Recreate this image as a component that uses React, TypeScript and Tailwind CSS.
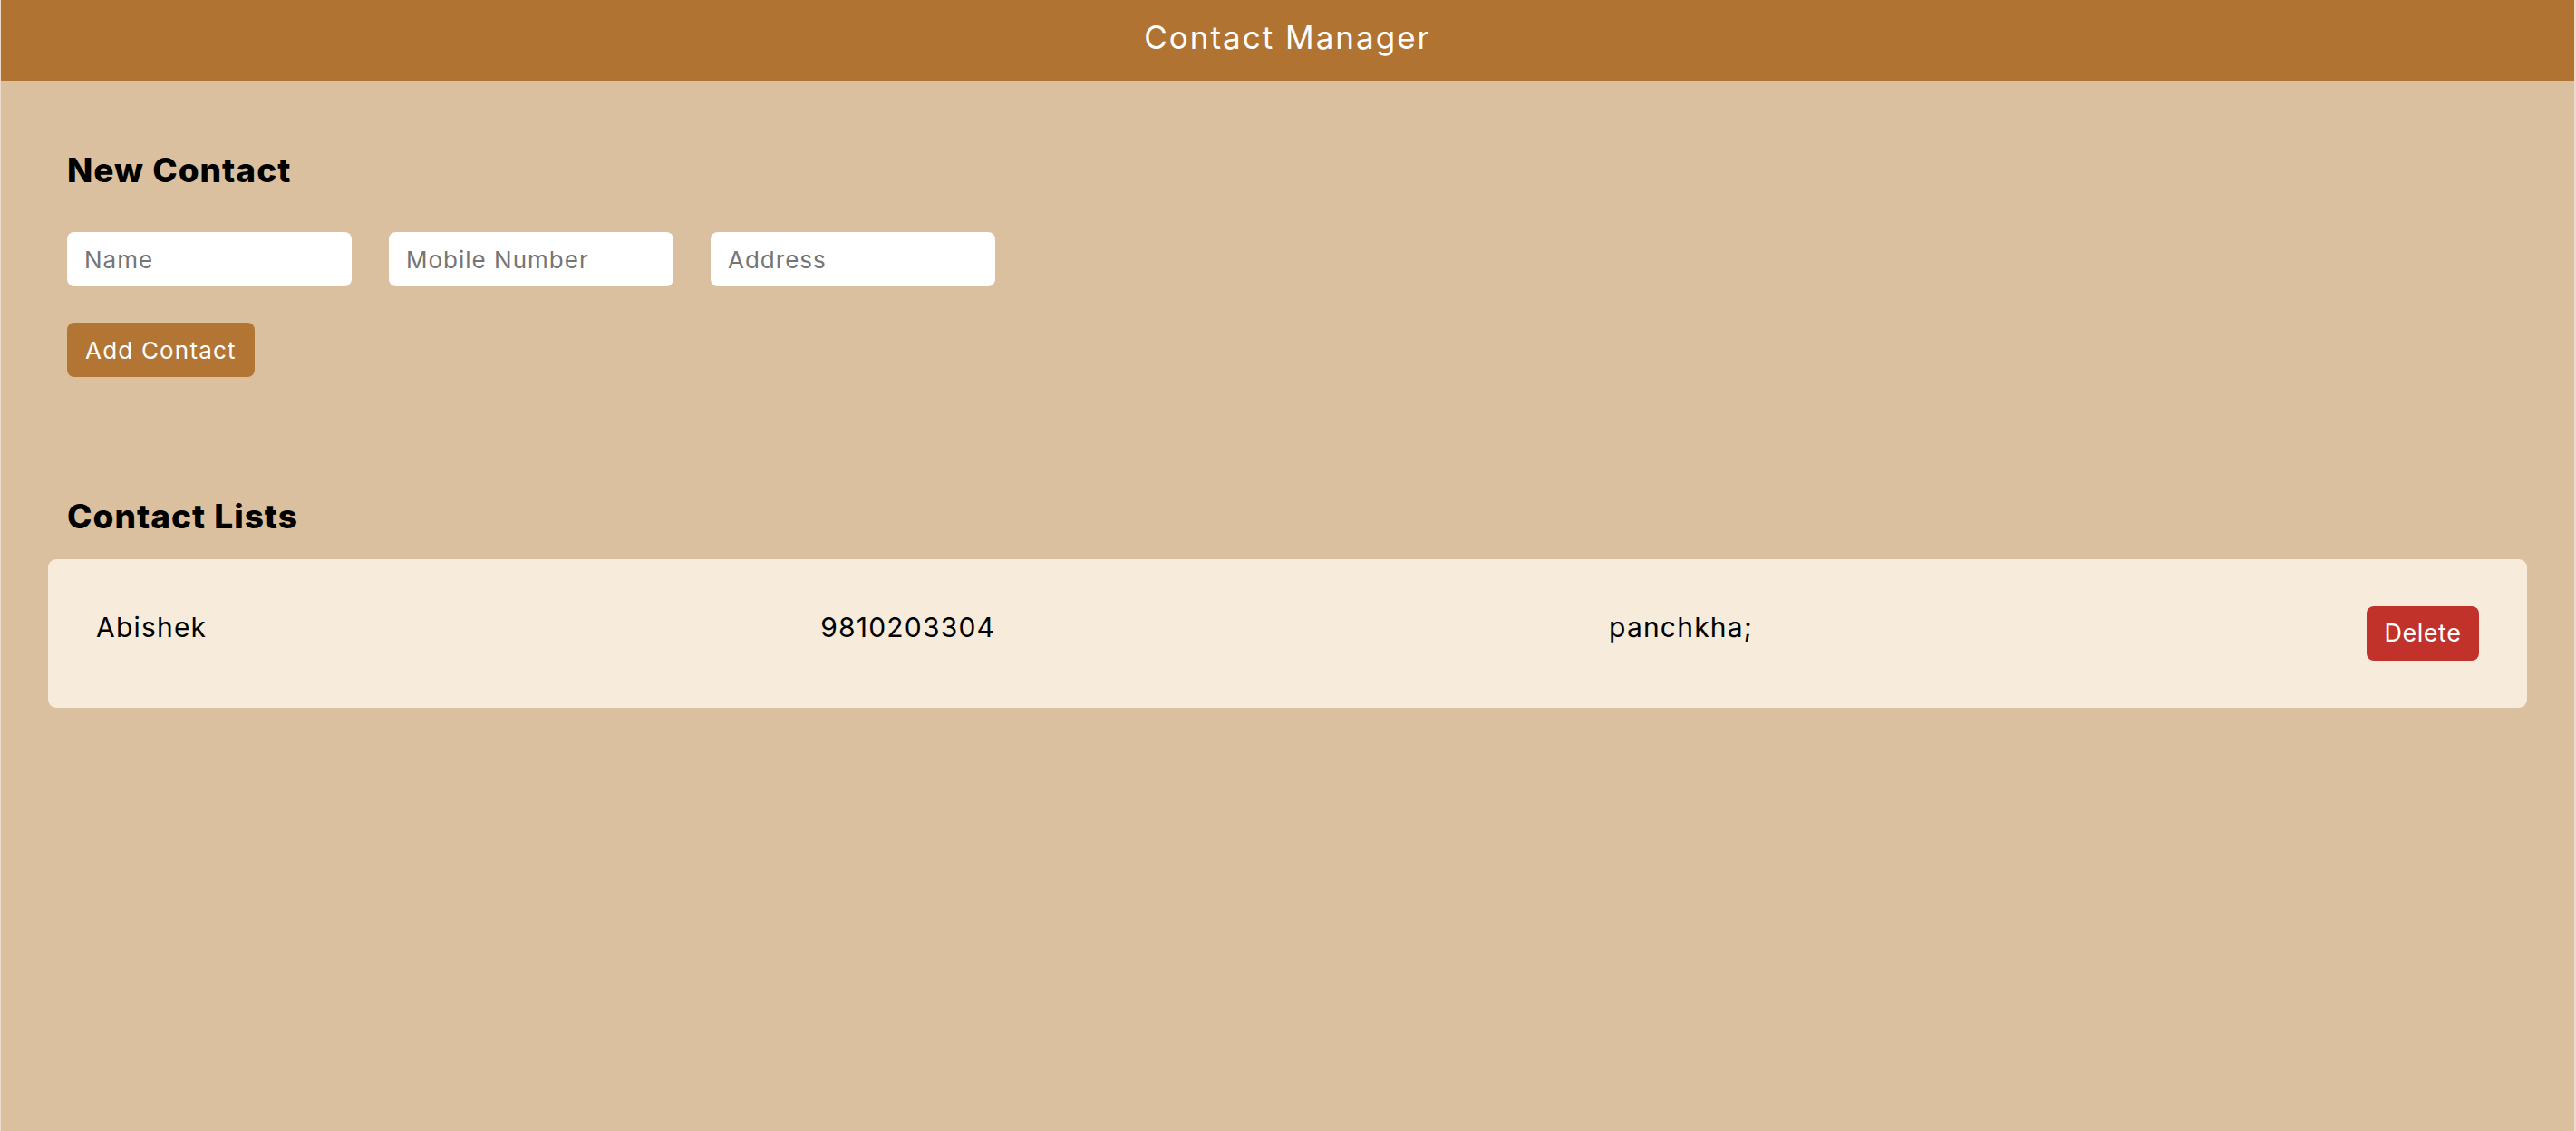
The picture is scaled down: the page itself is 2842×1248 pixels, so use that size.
import React, { useState } from "react";

type Contact = {
  id: number;
  name: string;
  mobile: string;
  address: string;
};

const font = { fontFamily: "Inter, 'Noto Sans', sans-serif" };

export default function App() {
  const [contacts, setContacts] = useState<Contact[]>([
    { id: 1, name: "Abishek", mobile: "9810203304", address: "panchkha;" },
  ]);
  const [name, setName] = useState("");
  const [mobile, setMobile] = useState("");
  const [address, setAddress] = useState("");

  const addContact = () => {
    if (!name.trim()) return;
    setContacts([...contacts, { id: Date.now(), name, mobile, address }]);
    setName("");
    setMobile("");
    setAddress("");
  };

  const deleteContact = (id: number) =>
    setContacts(contacts.filter(c => c.id !== id));

  return (
    <div
      className="min-h-screen bg-[#dbc0a0] border-l border-r-2 border-[#ebdccb]"
      style={font}
    >
      <header className="h-[89px] bg-[#b07332] flex items-center justify-center">
        <h1 className="text-white text-[35px] font-normal leading-none tracking-[2px] pb-[6px]">
          Contact Manager
        </h1>
      </header>

      <main className="pb-10">
        {/* New contact form */}
        <section className="px-[73px] pt-[80px]">
          <h2 className="text-[37px] font-extrabold leading-none text-black tracking-[1px]">
            New Contact
          </h2>
          <div className="flex gap-[41px] mt-[50px]">
            <input
              autoFocus
              value={name}
              onChange={e => setName(e.target.value)}
              placeholder="Name"
              className="w-[314px] h-[60px] rounded-[8px] bg-white px-[19px] text-[26px] tracking-[1px] text-black placeholder:text-[#757575] outline-none"
            />
            <input
              value={mobile}
              onChange={e => setMobile(e.target.value)}
              placeholder="Mobile Number"
              className="w-[314px] h-[60px] rounded-[8px] bg-white px-[19px] text-[26px] tracking-[1px] text-black placeholder:text-[#757575] outline-none"
            />
            <input
              value={address}
              onChange={e => setAddress(e.target.value)}
              placeholder="Address"
              className="w-[314px] h-[60px] rounded-[8px] bg-white px-[19px] text-[26px] tracking-[1px] text-black placeholder:text-[#757575] outline-none"
            />
          </div>
          <button
            onClick={addContact}
            className="mt-[40px] h-[60px] px-[20px] rounded-[8px] bg-[#b27534] text-white text-[26px] tracking-[1.2px]"
          >
            Add Contact
          </button>
        </section>

        {/* Contact list */}
        <section className="pt-[135px]">
          <h2 className="px-[73px] text-[37px] font-extrabold leading-none text-black tracking-[1px]">
            Contact Lists
          </h2>
          <div className="mx-[52px] mt-[29px] flex flex-col gap-4">
            {contacts.map(c => (
              <div
                key={c.id}
                className="h-[164px] rounded-[9px] bg-[#f7ecdb] px-[53px] flex items-center justify-between text-[30px] tracking-[1.2px] text-black"
              >
                <span className="pb-[14px]">{c.name}</span>
                <span className="pb-[14px]">{c.mobile}</span>
                <span className="pb-[14px]">{c.address}</span>
                <button
                  onClick={() => deleteContact(c.id)}
                  className="h-[60px] w-[124px] rounded-[8px] bg-[#c0322a] text-white text-[27px] tracking-[0.5px]"
                >
                  Delete
                </button>
              </div>
            ))}
          </div>
        </section>
      </main>
    </div>
  );
}
